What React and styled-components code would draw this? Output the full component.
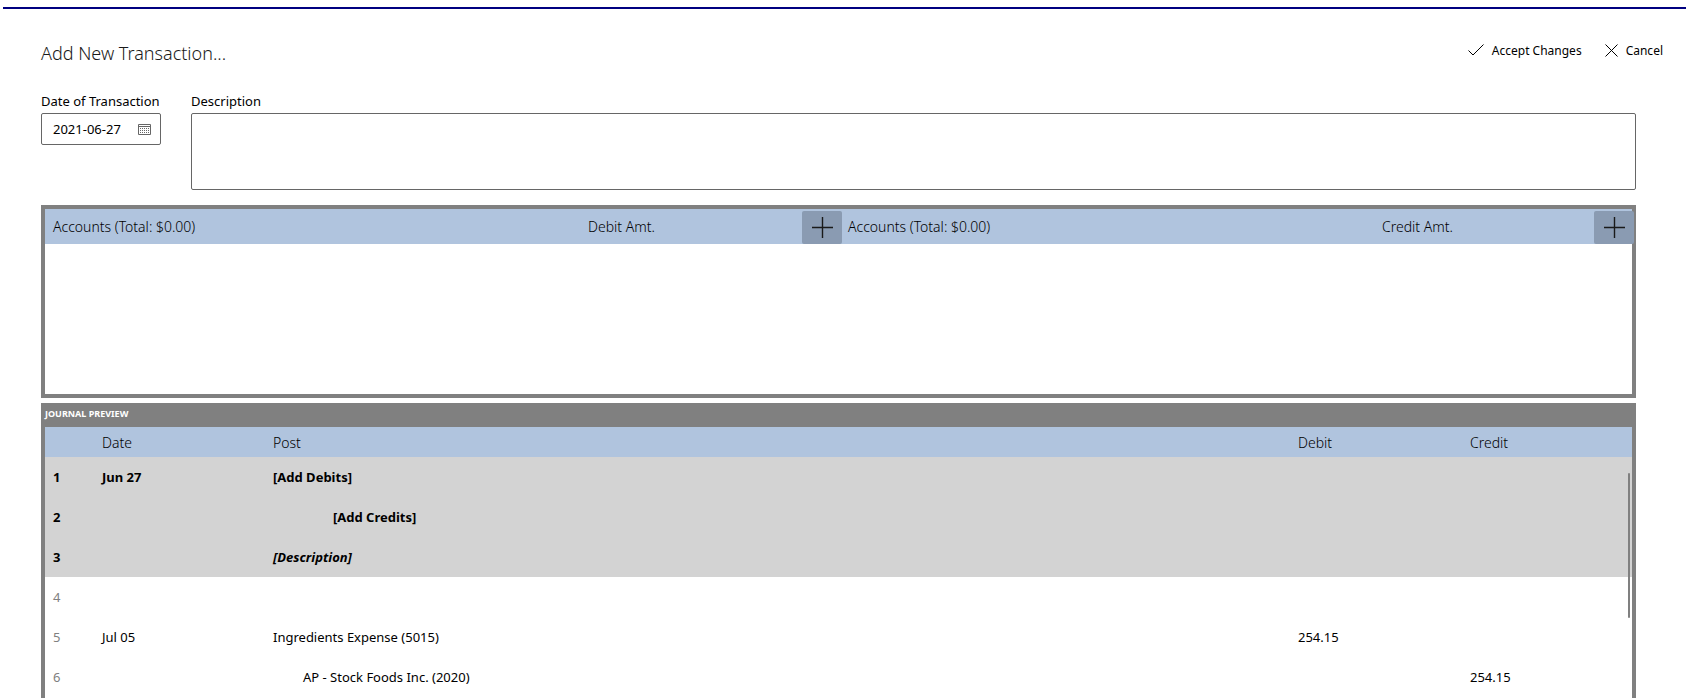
import styled, { createGlobalStyle } from "styled-components"

const GlobalStyle = createGlobalStyle`
    html, body {
        margin: 0;
        height: 100%;
        overflow: hidden;
        background: white;
    }
    * {
        box-sizing: border-box;
    }
`

const Page = styled.div`
    height: 698px;
    overflow: hidden;
    padding: 7px 0 0 3px;
    font-family: "Noto Sans", "Open Sans", sans-serif;
    color: #000;
`
const TopLine = styled.div`
    height: 2px;
    background: #000080;
`
const Content = styled.div`
    padding-left: 38px;
`
const Header = styled.div`
    display: flex;
    justify-content: space-between;
    align-items: flex-start;
    height: 64px;
    padding: 32px 23px 0 0;
`
const Title = styled.h1`
    margin: 0;
    font-size: 18px;
    line-height: 24px;
    font-weight: 300;
    color: #1a1a1a;
`
const Actions = styled.div`
    display: flex;
    gap: 23px;
    margin-top: -3px;
`
const ActionButton = styled.button`
    display: flex;
    align-items: center;
    gap: 8px;
    height: 24px;
    padding: 0;
    border: none;
    background: none;
    font: inherit;
    font-size: 12px;
    color: #000;
`
const Form = styled.div`
    display: flex;
    gap: 30px;
    width: 1595px;
    height: 132px;
    padding-top: 18px;
`
const DateField = styled.div`
    width: 120px;
`
const DescriptionField = styled.div`
    flex: 1;
`
const Label = styled.div`
    height: 22px;
    font-size: 13px;
    line-height: 20px;
    white-space: nowrap;
`
const DateInput = styled.div`
    display: flex;
    align-items: center;
    justify-content: space-between;
    height: 32px;
    padding: 0 9px 0 11px;
    border: 1px solid #666;
    border-radius: 2px;
    font-size: 13px;
`
const DescriptionInput = styled.div`
    height: 77px;
    border: 1px solid #666;
    border-radius: 2px;
`
const AccountsPanel = styled.div`
    width: 1595px;
    height: 193px;
    border: 4px solid #808080;
`
const AccountsHeader = styled.div`
    display: grid;
    grid-template-columns: 795px 1fr;
    height: 35px;
    background: #b0c4de;
`
const AccountsSide = styled.div`
    display: grid;
    grid-template-columns: ${(props) => props.$nameWidth}px 1fr 38px;
    align-items: center;
    padding-left: 8px;
    font-size: 14px;
    font-weight: 300;
`
const AddButton = styled.button`
    display: flex;
    align-items: center;
    justify-content: center;
    width: 40px;
    height: 33px;
    margin-top: 1px;
    padding: 0;
    border: none;
    border-radius: 2px;
    background: #8a9bb2;
`
const JournalPanel = styled.div`
    position: relative;
    width: 1595px;
    height: 295px;
    margin-top: 5px;
    border: solid #808080;
    border-width: 0 4px;
`
const JournalTitle = styled.div`
    height: 24px;
    margin: 0 -4px;
    padding: 1px 4px 0;
    background: #808080;
    color: white;
    font-size: 9px;
    line-height: 20px;
    font-weight: 700;
    text-transform: uppercase;
`
const columns = "57px 171px 1025px 172px 1fr"
const JournalHeader = styled.div`
    display: grid;
    grid-template-columns: ${columns};
    align-items: center;
    height: 30px;
    background: #b0c4de;
    font-size: 14px;
    font-weight: 300;
`
const Row = styled.div`
    display: grid;
    grid-template-columns: ${columns};
    align-items: center;
    height: 40px;
    font-size: 13px;
    background: ${(props) => (props.$draft ? "#d3d3d3" : "white")};
    font-weight: ${(props) => (props.$draft ? 700 : 400)};
`
const LineNumber = styled.div`
    padding-left: 8px;
    color: ${(props) => (props.$draft ? "#000" : "#808080")};
`
const Post = styled.div`
    padding-left: ${(props) => (props.$indent ? props.$indent : 0)}px;
    font-style: ${(props) => (props.$italic ? "italic" : "normal")};
`
const ScrollThumb = styled.div`
    position: absolute;
    top: 70px;
    right: 2px;
    width: 2px;
    height: 145px;
    border-radius: 1px;
    background: #808080;
`

const journalRows = [
    { draft: true, date: "Jun 27", post: "[Add Debits]" },
    { draft: true, post: "[Add Credits]", indent: 60 },
    { draft: true, post: "[Description]", italic: true },
    {},
    { date: "Jul 05", post: "Ingredients Expense (5015)", debit: "254.15" },
    { post: "AP - Stock Foods Inc. (2020)", indent: 30, credit: "254.15" },
    {},
]

const CheckIcon = () => (
    <svg width="16" height="12" viewBox="0 0 16 12" fill="none" stroke="#000" strokeWidth="1">
        <path d="M0.5 6.5 L5 11 L15.5 0.5" />
    </svg>
)

const CrossIcon = () => (
    <svg width="13" height="13" viewBox="0 0 13 13" fill="none" stroke="#000" strokeWidth="1">
        <path d="M0.5 0.5 L12.5 12.5 M12.5 0.5 L0.5 12.5" />
    </svg>
)

const PlusIcon = () => (
    <svg width="21" height="21" viewBox="0 0 21 21" fill="none" stroke="#1a1a1a" strokeWidth="1.4">
        <path d="M10.5 0 V21 M0 10.5 H21" />
    </svg>
)

const CalendarIcon = () => (
    <svg width="13" height="12" viewBox="0 0 13 12" fill="none" stroke="#666" strokeWidth="1">
        <path d="M0.5 1.5 H12.5 V11.5 H0.5 Z M0.5 3.5 H12.5" />
        <path d="M2 5.5 H11 M2 7.5 H11 M2 9.5 H11" strokeDasharray="1 1" />
    </svg>
)

const App = () => {
    return (
        <Page>
            <GlobalStyle />
            <TopLine />
            <Content>
                <Header>
                    <Title>Add New Transaction...</Title>
                    <Actions>
                        <ActionButton><CheckIcon />Accept Changes</ActionButton>
                        <ActionButton><CrossIcon />Cancel</ActionButton>
                    </Actions>
                </Header>
                <Form>
                    <DateField>
                        <Label>Date of Transaction</Label>
                        <DateInput>2021-06-27<CalendarIcon /></DateInput>
                    </DateField>
                    <DescriptionField>
                        <Label>Description</Label>
                        <DescriptionInput />
                    </DescriptionField>
                </Form>
                <AccountsPanel>
                    <AccountsHeader>
                        <AccountsSide $nameWidth={535}>
                            <span>Accounts (Total: $0.00)</span>
                            <span>Debit Amt.</span>
                            <AddButton><PlusIcon /></AddButton>
                        </AccountsSide>
                        <AccountsSide $nameWidth={534}>
                            <span>Accounts (Total: $0.00)</span>
                            <span>Credit Amt.</span>
                            <AddButton><PlusIcon /></AddButton>
                        </AccountsSide>
                    </AccountsHeader>
                </AccountsPanel>
                <JournalPanel>
                    <JournalTitle>Journal Preview</JournalTitle>
                    <JournalHeader>
                        <span />
                        <span>Date</span>
                        <span>Post</span>
                        <span>Debit</span>
                        <span>Credit</span>
                    </JournalHeader>
                    {journalRows.map((row, i) => (
                        <Row key={i} $draft={row.draft}>
                            <LineNumber $draft={row.draft}>{i + 1}</LineNumber>
                            <div>{row.date}</div>
                            <Post $indent={row.indent} $italic={row.italic}>{row.post}</Post>
                            <div>{row.debit}</div>
                            <div>{row.credit}</div>
                        </Row>
                    ))}
                    <ScrollThumb />
                </JournalPanel>
            </Content>
        </Page>
    )
}

export default App
